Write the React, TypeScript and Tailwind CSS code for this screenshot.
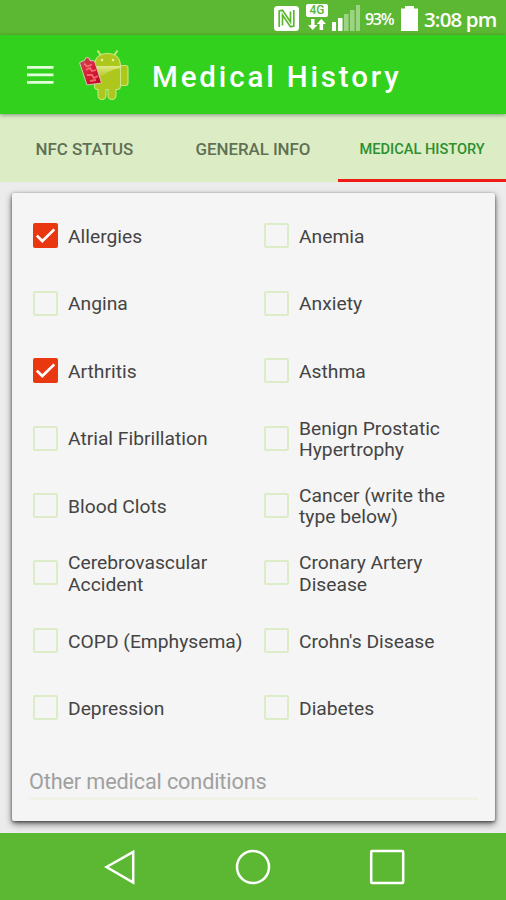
import React from "react";

const rows: [string, string, boolean][] = [
  ["Allergies", "Anemia", true],
  ["Angina", "Anxiety", false],
  ["Arthritis", "Asthma", true],
  ["Atrial Fibrillation", "Benign Prostatic\nHypertrophy", false],
  ["Blood Clots", "Cancer (write the\ntype below)", false],
  ["Cerebrovascular\nAccident", "Cronary Artery\nDisease", false],
  ["COPD (Emphysema)", "Crohn's Disease", false],
  ["Depression", "Diabetes", false],
];

function Item({ label, checked = false }: { label: string; checked?: boolean }) {
  return (
    <label className="flex items-center">
      {checked ? (
        <span className="flex h-[25px] w-[25px] shrink-0 items-center justify-center rounded-[2px] bg-[#e9370f]">
          <svg width="25" height="25" viewBox="0 0 25 25" fill="none">
            <path d="M3.8 12.6l5.5 5.4L21.3 6.4" stroke="#fff" strokeWidth="2.7" />
          </svg>
        </span>
      ) : (
        <span className="h-[25px] w-[25px] shrink-0 rounded-[2px] border-2 border-[#dcecc7]" />
      )}
      <span className="ml-[10px] whitespace-pre pt-[2px] text-[19.25px] leading-[21.5px] text-[#444444]">
        {label}
      </span>
    </label>
  );
}

function StatusBar() {
  return (
    <div className="flex h-[35px] items-center bg-[#5cb832] pl-[274px] text-white">
      <svg width="25" height="25" viewBox="0 0 25 25" className="mt-px shrink-0">
        <rect x="0" y="0" width="25" height="25" rx="3.5" fill="#fff" />
        <path
          d="M5.2 21V5l3.3-.7L16.5 16V5.5M19.8 4v16l-3.3.7L8.500 9V19.500"
          fill="none"
          stroke="#5cb832"
          strokeWidth="1.7"
        />
      </svg>
      <div className="ml-[7px] flex w-[22px] flex-col items-center">
        <span className="flex h-[13px] w-[22px] items-center justify-center rounded-[2px] bg-white text-[12px] font-medium leading-[13px] text-[#5cb832]">
          4G
        </span>
        <svg width="18" height="13" viewBox="0 0 18 13" className="mt-px" fill="#fff">
          <path d="M3 1h3.500v6h3L4.700 12 0 7h3zM11.600 12h3.500V6H18L13.300 1 8.800 6h2.800z" />
        </svg>
      </div>
      <svg width="30" height="28" viewBox="0 0 30 28" className="ml-[3px] shrink-0" fill="#fff">
        <rect x="1" y="18" width="4" height="9" />
        <rect x="7" y="14" width="4.5" height="13" />
        <rect x="13" y="10" width="4.5" height="17" opacity=".4" />
        <rect x="19" y="6" width="4.5" height="21" opacity=".4" />
        <rect x="25" y="1" width="4" height="26" opacity=".4" />
      </svg>
      <span className="ml-[4px] mt-[2px] w-[29px] whitespace-nowrap font-['Open_Sans',sans-serif] text-[16px] font-semibold tracking-[-1.3px]">
        93%
      </span>
      <svg width="17" height="25" viewBox="0 0 17 25" className="ml-[7px] mt-[2px] shrink-0" fill="#fff">
        <path d="M4 0h9v2.500h4V25H0V2.500h4z" />
      </svg>
      <span className="ml-[6px] mt-[3px] whitespace-nowrap font-['Open_Sans',sans-serif] text-[20.5px] font-semibold tracking-[-0.85px]">
        3:08 pm
      </span>
    </div>
  );
}

function Robot() {
  return (
    <svg width="52" height="54" viewBox="0 0 52 54" className="ml-[24px] shrink-0">
      <defs>
        <linearGradient id="card" x1="0" y1="0" x2="1" y2="1">
          <stop offset="0" stopColor="#a8525a" />
          <stop offset=".35" stopColor="#da2a3e" />
          <stop offset="1" stopColor="#b8001c" />
        </linearGradient>
        <linearGradient id="shine" x1="0" y1="0" x2="0" y2="1">
          <stop offset="0" stopColor="#f1f6b4" stopOpacity=".75" />
          <stop offset="1" stopColor="#c8d644" stopOpacity="0" />
        </linearGradient>
      </defs>
      <g fill="#aec71c" stroke="#c9e682" strokeWidth="1.1">
        <path d="M19.500 2.500l3.500 5M39.500 2.500l-3.500 5" strokeWidth="2" />
        <rect x="42" y="17.500" width="8" height="20" rx="2.500" />
        <path d="M16.500 17.500C17 10 21.500 5.500 29.500 5.500S42 10 42.500 17.500V38q0 3.500-3.500 3.500h-1V47.500a4 4 0 0 1-8 0V41.500h-2V47.500a4 4 0 0 1-8 0V41.500h-0.500q-3 0-3-3.500z" />
      </g>
      <path d="M17 18h25.500v2q-12 1-25.500 14z" fill="url(#shine)" />
      <circle cx="24" cy="12" r="1.300" fill="#e4f1a0" />
      <circle cx="35" cy="12" r="1.300" fill="#e4f1a0" />
      <path d="M1.500 14.500l5-2 1.500-3 3 .5 1 2.500 4.500 .5L23.500 35 9 37z" fill="url(#card)" stroke="#d5c9b0" strokeWidth="1" />
      <path d="M6 15.500l3 3 5-2M8 22l4-2 2 3 4-1M9 27l5 0 2 3 4-2M12 33l6-1" fill="none" stroke="#ff7c82" strokeOpacity=".8" strokeWidth="1.800" />
    </svg>
  );
}

export default function App() {
  return (
    <div className="flex h-[900px] w-[506px] flex-col overflow-hidden bg-[#ececec] font-[Roboto,sans-serif]">
      <StatusBar />
      <header className="z-10 flex h-[79px] shrink-0 items-center bg-[#32d11d] pl-[27px] shadow-[0_1px_4px_rgba(0,0,0,0.4)]">
        <svg width="27" height="20" viewBox="0 0 27 20" fill="#e2ffdc" className="shrink-0">
          <path d="M0 1h26.5v2.7H0zM0 8.5h26.5v2.7H0zM0 16h26.5v2.7H0z" />
        </svg>
        <Robot />
        <h1 className="ml-[22px] mt-[4px] whitespace-nowrap text-[29.5px] font-medium leading-[36px] tracking-[2.85px] text-white">
          Medical History
        </h1>
      </header>
      <nav className="grid h-[67.5px] shrink-0 grid-cols-3 bg-[#dcedc5] text-center font-medium text-[#607054]">
        <div className="flex items-center justify-center whitespace-nowrap pt-[4px] text-[16.9px] tracking-[-0.05px]">NFC STATUS</div>
        <div className="flex items-center justify-center whitespace-nowrap pt-[4px] text-[16.9px] tracking-[-0.05px]">GENERAL INFO</div>
        <div className="ml-px flex items-center justify-center whitespace-nowrap border-b-[3px] border-[#ef1b16] pt-[7px] text-[14.6px] text-[#2c9030]">
          MEDICAL HISTORY
        </div>
      </nav>
      <main className="flex flex-1 flex-col px-[11px] pt-[11.5px] pb-[12px]">
        <section className="ml-px flex flex-1 flex-col rounded-[2px] bg-[#f5f5f5] pt-[9px] shadow-[0_3px_7px_rgba(0,0,0,0.55),0_1px_3px_rgba(0,0,0,0.5)]">
          {rows.map(([left, right, checked]) => (
            <div key={left} className="grid h-[67.45px] shrink-0 grid-cols-[231px_1fr] pl-[21px]">
              <Item label={left} checked={checked} />
              <Item label={right} />
            </div>
          ))}
          <div className="mx-[17px] mt-[19px] flex h-[39px] items-center border-b-[3px] border-[#eff3e6] pt-[7px] text-[21.7px] tracking-[-0.15px] text-[#a0a0a0]">
            Other medical conditions
          </div>
        </section>
      </main>
      <footer className="flex h-[67px] shrink-0 items-center bg-[#5cb832] pl-[104px]">
        <svg width="302" height="38" viewBox="0 0 302 38" fill="none" stroke="#fff" strokeWidth="2.5">
          <path d="M2.5 19L29.2 4v30.5z" />
          <circle cx="149" cy="19" r="16" />
          <rect x="267.2" y="3" width="32" height="32" rx="1" />
        </svg>
      </footer>
    </div>
  );
}
